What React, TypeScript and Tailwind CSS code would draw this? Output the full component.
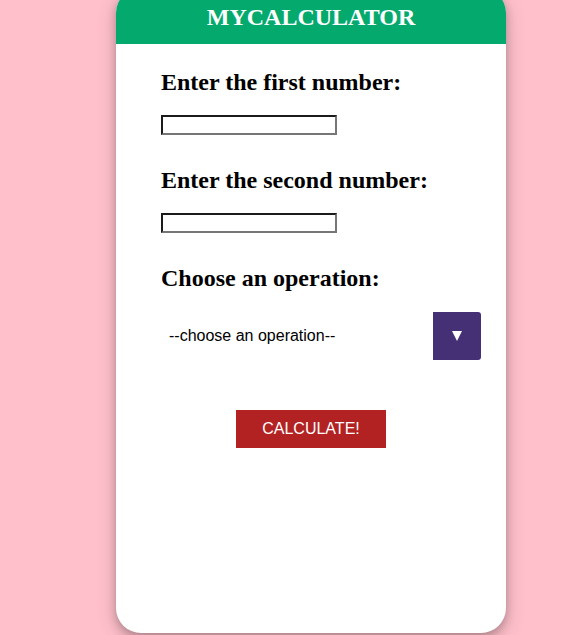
import React from 'react';

export default function App() {
  return (
    <div className="min-h-[635px] w-full overflow-hidden bg-[#ffc0cb]">
      <div className="-mt-3 ml-[116px] flex h-[645px] w-[390px] flex-col overflow-hidden rounded-[25px] bg-white shadow-[0_4px_8px_0_rgba(0,0,0,0.2),0_6px_20px_0_rgba(0,0,0,0.19)]">
        <div className="flex h-[56px] items-center justify-center bg-[#04aa6d] pt-[1px]">
          <h1 className="font-['Liberation_Serif',serif] text-[24px] font-bold leading-[28px] text-white">MYCALCULATOR</h1>
        </div>

        <div className="flex flex-col pl-[45px] font-['Liberation_Serif',serif]">
          <label className="mt-[24px] text-[24px] font-bold leading-[28px] text-black">Enter the first number:</label>
          <input
            type="text"
            className="mt-[19px] h-[20px] w-[176px] border-2 border-t-[#1b1b1b] border-l-[#1b1b1b] border-r-[#767676] border-b-[#767676] bg-white outline-none"
          />

          <label className="mt-[31px] text-[24px] font-bold leading-[28px] text-black">Enter the second number:</label>
          <input
            type="text"
            className="mt-[19px] h-[20px] w-[176px] border-2 border-t-[#1b1b1b] border-l-[#1b1b1b] border-r-[#767676] border-b-[#767676] bg-white outline-none"
          />

          <label className="mt-[31px] text-[24px] font-bold leading-[28px] text-black">Choose an operation:</label>
          <div className="mt-[20px] flex h-[48px] w-[320px] items-center">
            <select className="h-full flex-1 appearance-none bg-white pl-[8px] font-['Liberation_Sans',Arial,sans-serif] text-[16px] text-black outline-none">
              <option>--choose an operation--</option>
              <option>+</option>
              <option>-</option>
              <option>*</option>
              <option>/</option>
            </select>
            <div className="flex h-[48px] w-[48px] items-center justify-center rounded-r-[3px] bg-[#452f75]">
              <svg width="10" height="10" viewBox="0 0 10 10">
                <polygon points="0,0 10,0 5,10" fill="white" />
              </svg>
            </div>
          </div>
        </div>

        <div className="mt-[50px] flex justify-center">
          <button className="h-[38px] w-[150px] bg-[#b22222] font-['Liberation_Sans',Arial,sans-serif] text-[16px] text-white">
            CALCULATE!
          </button>
        </div>
      </div>
    </div>
  );
}
